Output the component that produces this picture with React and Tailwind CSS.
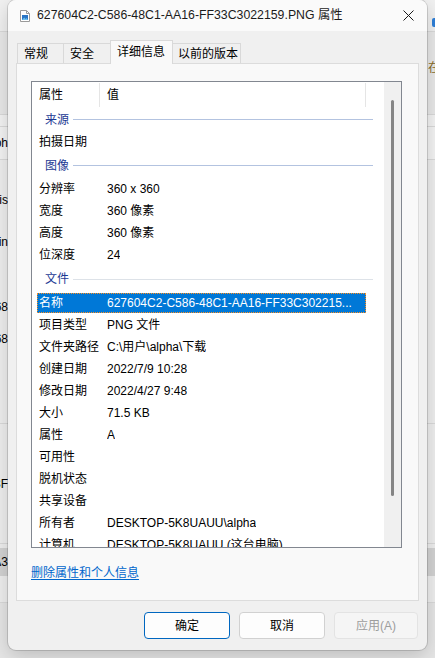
import React from "react";

const rows1 = [
  { k: "分辨率", v: "360 x 360" },
  { k: "宽度", v: "360 像素" },
  { k: "高度", v: "360 像素" },
  { k: "位深度", v: "24" },
];

const rows2 = [
  { k: "项目类型", v: "PNG 文件" },
  { k: "文件夹路径", v: "C:\\用户\\alpha\\下载" },
  { k: "创建日期", v: "2022/7/9 10:28" },
  { k: "修改日期", v: "2022/4/27 9:48" },
  { k: "大小", v: "71.5 KB" },
  { k: "属性", v: "A" },
  { k: "可用性", v: "" },
  { k: "脱机状态", v: "" },
  { k: "共享设备", v: "" },
  { k: "所有者", v: "DESKTOP-5K8UAUU\\alpha" },
  { k: "计算机", v: "DESKTOP-5K8UAUU (这台电脑)" },
];

const Row = ({ k, v }) => (
  <div className="h-[22px] flex items-center shrink-0">
    <div className="ml-[5px] w-[329px] h-[20px] flex items-center">
      <div className="w-[70px] pl-[2px] whitespace-nowrap">{k}</div>
      <div className="whitespace-nowrap overflow-hidden">{v}</div>
    </div>
  </div>
);

const Group = ({ label, h, line }) => (
  <div className={`${h} flex items-center shrink-0`}>
    <span className="pl-[13px] text-[#1c3a94]">{label}</span>
    <div className={`ml-[4px] mr-[11px] flex-1 h-px ${line}`} />
  </div>
);

const Edge = ({ children, right }) => (
  <div className={`w-[8px] overflow-hidden flex whitespace-nowrap ${right ? "justify-start" : "justify-end"}`}>
    {children}
  </div>
);

const Background = () => (
  <div className="flex flex-col h-[658px] w-full bg-[#ececec] text-[12px] text-black">
    <div className="h-[32px] shrink-0 border-b border-[#dadada] bg-[#f1f1f1] flex justify-between items-start">
      <Edge />
      <div className="w-[8px] pt-[18px] pl-[5px]">
        <div className="w-[8px] h-[9px] rounded-[2px] bg-[#2f7fd8]" />
      </div>
    </div>
    <div className="h-[83px] shrink-0 border-b border-[#dadada] bg-[#e9e9e9] flex justify-between items-start">
      <Edge />
      <div className="w-[8px] overflow-hidden pt-[27px] pl-[1px] text-[#8a6d2a]">在</div>
    </div>
    <div className="h-[12px] shrink-0 border-b border-[#dadada] bg-[#f4f4f4]" />
    <div className="h-[33px] shrink-0 border-b border-[#dadada] bg-[#f4f4f4] flex items-center">
      <Edge>graph</Edge>
    </div>
    <div className="h-[264px] shrink-0 border-b border-[#dadada] bg-[#efefef] flex flex-col">
      <div className="mt-[31px]"><Edge>list.is</Edge></div>
      <div className="mt-[24px]"><Edge>Outlin</Edge></div>
      <div className="mt-[47px]"><Edge>5B68</Edge></div>
      <div className="mt-[14px]"><Edge>4A68</Edge></div>
    </div>
    <div className="h-[120px] shrink-0 border-b border-[#dadada] bg-[#efefef] flex flex-col">
      <div className="mt-[51px]"><Edge>C3F</Edge></div>
    </div>
    <div className="h-[59px] shrink-0 border-b border-[#dadada] bg-[#efefef] flex flex-col">
      <div className="mt-[4px] h-[28px] bg-[#d3d3d3] flex items-center">
        <Edge>A3</Edge>
      </div>
    </div>
    <div className="flex-1 bg-[#e6e6e6]" />
  </div>
);

const FileIcon = () => (
  <svg width="10" height="12" viewBox="0 0 10 12">
    <path d="M0.5 0.5h6l3 3v8h-9z" fill="#fff" stroke="#9a9a9a" />
    <path d="M6.5 0.5v3h3" fill="none" stroke="#9a9a9a" />
    <rect x="2" y="5" width="6" height="5" fill="#2a76c6" />
    <path d="M2 10l2.2-2.6 1.4 1.5 1-1 1.4 2.1z" fill="#6cc0f0" />
  </svg>
);

export default function App() {
  return (
    <div className="relative w-[435px] h-[658px] overflow-hidden font-['Liberation_Sans','Noto_Sans_CJK_SC',sans-serif] text-[12px] text-black">
      <Background />

      <div className="absolute left-[8px] top-0 w-[419px] h-[650px] rounded-[8px] overflow-hidden bg-[#f0f0f0] shadow-[0_0_0_1px_rgba(0,0,0,0.14),0_6px_20px_rgba(0,0,0,0.18)] flex flex-col">
        {/* title bar */}
        <div className="h-[31px] shrink-0 bg-[#fafafa] flex items-center">
          <div className="ml-[12px] flex items-center">
            <FileIcon />
          </div>
          <div className="ml-[7px] text-[12.3px] text-[#1a1a1a] whitespace-nowrap">
            627604C2-C586-48C1-AA16-FF33C3022159.PNG 属性
          </div>
          <div className="ml-auto w-[37px] h-full flex items-center justify-center">
            <svg width="11" height="11" viewBox="0 0 11 11">
              <path d="M0.5 0.5l10 10M10.5 0.5l-10 10" stroke="#1a1a1a" strokeWidth="1" />
            </svg>
          </div>
        </div>

        {/* body */}
        <div className="flex-1 flex flex-col px-[8px]">
          {/* tabs */}
          <div className="mt-[9px] h-[23px] flex items-end pl-[1px] relative z-10">
            <div className="w-[47px] h-[20px] border border-b-0 border-[#d9d9d9] bg-[#f0f0f0] flex items-center pl-[6px]">常规</div>
            <div className="w-[48px] h-[20px] -ml-px border border-b-0 border-[#d9d9d9] bg-[#f0f0f0] flex items-center pl-[6px]">安全</div>
            <div className="w-[63px] h-[24px] -ml-px -mb-px border border-b-0 border-[#d9d9d9] bg-[#f9f9f9] flex items-center pl-[6px] pb-[2px]">详细信息</div>
            <div className="w-[69px] h-[20px] -ml-px border border-b-0 border-[#d9d9d9] bg-[#f0f0f0] flex items-center pl-[5px]">以前的版本</div>
          </div>

          {/* panel */}
          <div className="h-[538px] shrink-0 border border-[#dcdcdc] bg-[#f9f9f9] flex flex-col pl-[14px]">
            <div className="mt-[17px] w-[371px] h-[467px] border border-[#828790] bg-white flex overflow-hidden">
              <div className="flex-1 flex flex-col overflow-hidden">
                {/* header */}
                <div className="h-[26px] shrink-0 flex items-stretch">
                  <div className="w-[68px] pl-[7px] flex items-center border-r border-[#e5e5e5] my-[1px]">属性</div>
                  <div className="w-[266px] pl-[7px] flex items-center border-r border-[#e5e5e5] my-[1px]">值</div>
                </div>
                <Group label="来源" h="h-[23px]" line="bg-[#b3c3e0]" />
                <Row k="拍摄日期" v="" />
                <Group label="图像" h="h-[25px]" line="bg-[#b3c3e0]" />
                {rows1.map((r) => (
                  <Row key={r.k} {...r} />
                ))}
                <Group label="文件" h="h-[26px]" line="bg-[#dde2e8]" />
                <div className="h-[22px] flex items-center shrink-0">
                  <div className="ml-[5px] w-[329px] h-[20px] flex items-center bg-[#0078d7] text-white border border-dotted border-[#ff8f1f]">
                    <div className="w-[69px] pl-[1px] whitespace-nowrap">名称</div>
                    <div className="whitespace-nowrap overflow-hidden">627604C2-C586-48C1-AA16-FF33C302215...</div>
                  </div>
                </div>
                {rows2.map((r) => (
                  <Row key={r.k} {...r} />
                ))}
              </div>
              {/* scrollbar */}
              <div className="w-[17px] shrink-0 bg-[#f0f0f0] flex flex-col pl-[7px]">
                <div className="mt-[18px] w-[3px] h-[396px] rounded-full bg-[#858585]" />
              </div>
            </div>
            <div className="mt-[16px] text-[#0066cc] underline underline-offset-2 w-fit">删除属性和个人信息</div>
          </div>

          {/* buttons */}
          <div className="mt-[11px] h-[27px] flex justify-end gap-[9px] pr-px">
            <button className="w-[86px] h-[27px] rounded-[4px] bg-[#fdfdfd] border border-[#0067c0] text-black">确定</button>
            <button className="w-[86px] h-[27px] rounded-[4px] bg-[#fdfdfd] border border-[#d1d1d1] text-black">取消</button>
            <button className="w-[84px] h-[27px] rounded-[4px] bg-[#f5f5f5] border border-[#e3e3e3] text-[#9d9d9d]">应用(A)</button>
          </div>
        </div>
      </div>
    </div>
  );
}
